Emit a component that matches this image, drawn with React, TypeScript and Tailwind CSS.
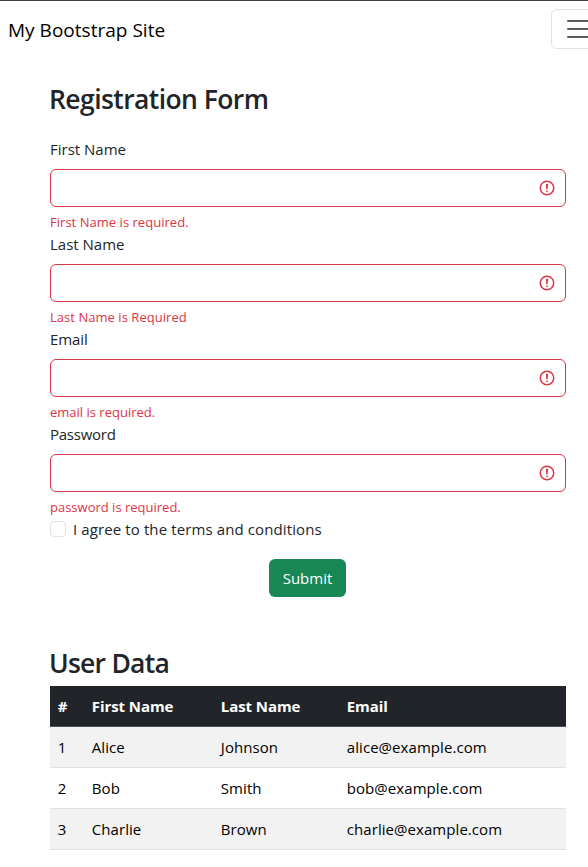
const fields = [
  { label: "First Name", error: "First Name is required.", labelSpacing: "tracking-normal", errorSpacing: "tracking-[0.03px]" },
  { label: "Last Name", error: "Last Name is Required", labelSpacing: "tracking-normal", errorSpacing: "tracking-[0.04px]" },
  { label: "Email", error: "email is required.", labelSpacing: "tracking-[-0.1px]", errorSpacing: "tracking-normal" },
  { label: "Password", error: "password is required.", labelSpacing: "tracking-[-0.25px]", errorSpacing: "tracking-normal" },
];

const users = [
  ["1", "Alice", "Johnson", "alice@example.com"],
  ["2", "Bob", "Smith", "bob@example.com"],
  ["3", "Charlie", "Brown", "charlie@example.com"],
];

function InvalidIcon() {
  return (
    <svg viewBox="0 0 12 12" width="18" height="18" fill="none" stroke="#dc3545">
      <circle cx="6" cy="6" r="4.5" />
      <path strokeLinejoin="round" d="M5.8 3.6h.4L6 6.5z" />
      <circle cx="6" cy="8.2" r=".6" fill="#dc3545" stroke="none" />
    </svg>
  );
}

export default function App() {
  return (
    <div className="h-[867px] w-full overflow-hidden border-t border-[#444] bg-white font-['Open_Sans','Noto_Sans',sans-serif] text-[15px] leading-6 text-[#212529]">
      <nav className="flex h-14 items-center justify-between pl-2">
        <a className="whitespace-nowrap pt-px text-[19px] leading-[30px] tracking-[0.02px] text-black">My Bootstrap Site</a>
        <button className="-mr-[19px] flex h-10 w-14 shrink-0 items-center justify-center rounded-md border border-[#dee2e6]">
          <svg viewBox="0 0 30 30" width="30" height="30" stroke="#212529" strokeOpacity=".75" strokeWidth="2" strokeLinecap="round" strokeMiterlimit="10">
            <path d="M4 7h22M4 15h22M4 23h22" />
          </svg>
        </button>
      </nav>
      <main className="ml-[50px] w-[516px] pt-6">
        <h2 className="-ml-px h-[34px] whitespace-nowrap pt-px text-[26.5px] font-[550] leading-[34px] tracking-[-0.58px]">
          Registration Form
        </h2>
        <form className="pt-[22px]">
          {fields.map((f) => (
            <div key={f.label}>
              <label className={`mb-2 block ${f.labelSpacing}`}>{f.label}</label>
              <div className="flex h-[38px] items-center justify-end rounded-md border border-[#dc3545] pr-[9px]">
                <InvalidIcon />
              </div>
              <p className={`h-[25px] pt-[5px] text-[13px] leading-[21px] text-[#dc3545] ${f.errorSpacing}`}>{f.error}</p>
            </div>
          ))}
          <label className="flex h-6 items-center gap-[7px]">
            <span className="h-4 w-4 rounded border border-[#dee2e6]" />
            <span className="tracking-[0.11px]">I agree to the terms and conditions</span>
          </label>
          <button type="button" className="ml-[219px] mt-[18px] flex h-[38px] w-[77px] items-center justify-center rounded-md bg-[#198754] text-white">
            Submit
          </button>
        </form>
        <h2 className="-ml-px mt-12 h-[41px] whitespace-nowrap pt-px text-[26.5px] font-[550] leading-[34px] tracking-[-0.75px]">
          User Data
        </h2>
        <table className="w-full table-fixed border-separate border-spacing-0 text-left text-black">
          <colgroup>
            <col className="w-[34px]" />
            <col className="w-[129px]" />
            <col className="w-[126px]" />
            <col />
          </colgroup>
          <thead>
            <tr className="bg-[#212529] tracking-[-0.08px] text-white">
              {["#", "First Name", "Last Name", "Email"].map((h) => (
                <th key={h} className="h-[41px] border-b border-[#4d5154] px-[7.8px] py-0 font-bold">{h}</th>
              ))}
            </tr>
          </thead>
          <tbody>
            {users.map((u) => (
              <tr key={u[0]} className="odd:bg-[#f2f2f2]">
                {u.map((c) => (
                  <td key={c} className="h-[41px] border-b border-[#dee2e6] px-[7.8px] py-0 tracking-[0.06px]">{c}</td>
                ))}
              </tr>
            ))}
          </tbody>
        </table>
      </main>
    </div>
  );
}
